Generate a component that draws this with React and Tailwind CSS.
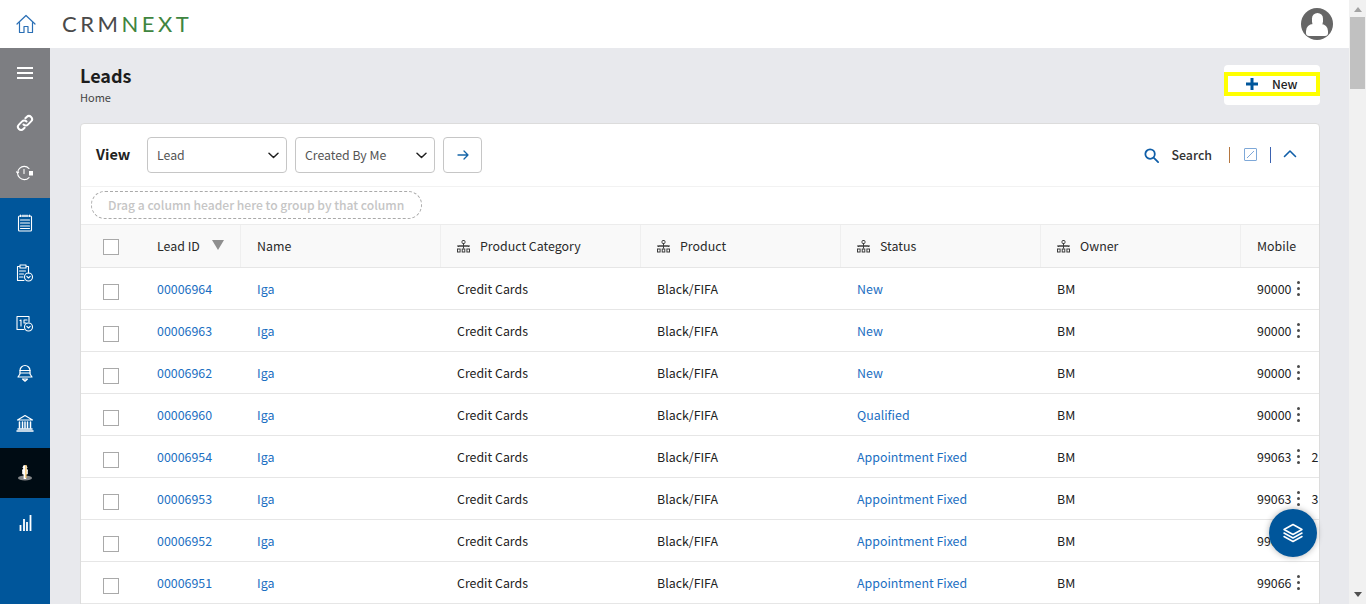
import React from "react";

const Ico = ({ children, w = 20, h = 20, vb = "0 0 20 20", className = "", sw = 1.4 }) => (
  <svg width={w} height={h} viewBox={vb} fill="none" stroke="currentColor" strokeWidth={sw} strokeLinecap="round" strokeLinejoin="round" className={className}>{children}</svg>
);

const Home = () => (
  <Ico w={20} h={20} sw={1.2} className="text-[#2a6fb5]">
    <path d="M1 10 10 1.5 19 10" />
    <path d="M3.5 8.5V18.5H8V12.5H12V18.5H16.5V8.5" />
  </Ico>
);
const Menu = () => (
  <Ico w={18} h={14} vb="0 0 18 14" sw={2}><path d="M1 2h16M1 7h16M1 12h16" strokeLinecap="butt" /></Ico>
);
const LinkI = () => (
  <Ico w={18} h={18} vb="0 0 18 18" sw={2}>
    <path d="M7.5 10.5a3 3 0 0 0 4.4.1l3.2-3.2a3.1 3.1 0 0 0-4.4-4.4L9.4 4.3" />
    <path d="M10.5 7.5a3 3 0 0 0-4.4-.1l-3.2 3.2a3.1 3.1 0 0 0 4.4 4.4l1.3-1.3" />
  </Ico>
);
const Clock = () => (
  <Ico w={18} h={16} vb="0 0 18 16" sw={1.1}>
    <path d="M13 3.5A6.6 6.6 0 1 0 13 12.5" />
    <path d="M8 4.5V8.5" />
    <path d="M1.5 8 .5 6.8M1.5 8l1.2-1" />
    <rect x="13" y="6" width="4" height="4.5" fill="currentColor" stroke="none" />
  </Ico>
);
const Notes = () => (
  <Ico w={16} h={18} vb="0 0 16 18" sw={1.1}>
    <rect x="1.5" y="2" width="13" height="15" rx="1" />
    <path d="M3.5 1v1.5M6 1v1.5M8 1v1.5M10 1v1.5M12.5 1v1.5M3.5 6h9M3.5 9h9M3.5 12h9M3.5 14.5h9" />
  </Ico>
);
const Clip = () => (
  <Ico w={18} h={18} vb="0 0 18 18" sw={1.1}>
    <path d="M10.5 2.5H12.5V9M8 16.5H1.5V2.5H3.5" />
    <rect x="4" y="1" width="6" height="3" />
    <path d="M3.5 7h6M3.5 10h4M3.5 13h3.5" />
    <circle cx="12.5" cy="13" r="4" />
    <path d="M10.8 12.4 12.5 14l1.7-1.6" />
  </Ico>
);
const Cal = () => (
  <Ico w={18} h={18} vb="0 0 18 18" sw={1.1}>
    <path d="M8 15.5H1V2.5H13V8" />
    <path d="M4 6.5 5 6v6M8 6H11M8 6v3h2" />
    <circle cx="12.5" cy="13" r="4" />
    <path d="M10.8 12.4 12.5 14l1.7-1.6" />
  </Ico>
);
const Bell = () => (
  <Ico w={18} h={18} vb="0 0 18 18" sw={1.2}>
    <path d="M4 10V6.5a5 5 0 0 1 10 0V10l2 3H2l2-3Z" />
    <path d="M4 6.5h10M4 9h10" />
    <path d="M6.5 15h5L9 17.2 6.5 15Z" />
  </Ico>
);
const Bank = () => (
  <Ico w={18} h={18} vb="0 0 18 18" sw={1.2}>
    <path d="M1.5 6 9 1.5 16.5 6H1.5Z" />
    <path d="M3.5 8v6M6.5 8v6M9 8v6M11.5 8v6M14.5 8v6" strokeWidth="1.5" />
    <path d="M2 15h14M1 17h16" strokeWidth="1.5" />
  </Ico>
);
const Figure = () => (
  <svg width="16" height="18" viewBox="0 0 16 18">
    <ellipse cx="8" cy="14" rx="7" ry="2.6" fill="#85888a" />
    <circle cx="8" cy="3.2" r="2.3" fill="#fff" />
    <rect x="5.2" y="5" width="5.6" height="5.5" rx="1.2" fill="#fff" />
    <rect x="6.6" y="9" width="2.6" height="6" fill="#fff" />
    <rect x="8.4" y="1" width="1" height="13" fill="#f2b33d" />
  </svg>
);
const Bars = () => (
  <Ico w={13} h={18} vb="0 0 13 18" sw={1.8}>
    <path d="M1.5 17v-6M5 17V5M8 17V8M11.5 17V1" strokeLinecap="butt" />
  </Ico>
);
const Tree = () => (
  <svg width="13" height="13" viewBox="0 0 13 13" fill="none" stroke="#3c3c3c" strokeWidth="1">
    <rect x="5" y=".5" width="3" height="3" rx="1" />
    <path d="M6.5 3.5v5M1.5 7V6h10v1M0 6h13" />
    <rect x=".5" y="9" width="2.6" height="3" />
    <rect x="5.2" y="9" width="2.6" height="3" />
    <rect x="9.9" y="9" width="2.6" height="3" />
  </svg>
);
const Chevron = () => (
  <Ico w={11} h={7} vb="0 0 11 7" sw={1.5} className="text-[#222]"><path d="M1 1.2 5.5 5.5 10 1.2" /></Ico>
);
const Kebab = () => (
  <span className="flex flex-col gap-[3px] ml-[6px] mr-[4px] shrink-0">
    <i className="block w-[3px] h-[3px] rounded-full bg-[#4a4a4a]" />
    <i className="block w-[3px] h-[3px] rounded-full bg-[#4a4a4a]" />
    <i className="block w-[3px] h-[3px] rounded-full bg-[#4a4a4a]" />
  </span>
);
const Box = () => <span className="block w-4 h-4 border border-[#a9a9a9] bg-white" />;

const nav = [
  [Menu, "grey"], [LinkI, "grey"], [Clock, "grey"], [Notes], [Clip], [Cal], [Bell], [Bank], [Figure, "active"], [Bars],
];

const rows = [
  ["00006964", "New", "90000", ""],
  ["00006963", "New", "90000", ""],
  ["00006962", "New", "90000", ""],
  ["00006960", "Qualified", "90000", ""],
  ["00006954", "Appointment Fixed", "99063", "2"],
  ["00006953", "Appointment Fixed", "99063", "3"],
  ["00006952", "Appointment Fixed", "99066", ""],
  ["00006951", "Appointment Fixed", "99066", ""],
];

const GRID = "grid grid-cols-[60px_100px_200px_200px_200px_200px_200px_78px]";
const link = "text-[#1c6fc2]";

const Select = ({ label }) => (
  <div className="w-[140px] h-9 border border-[#c6c6c6] rounded-[4px] flex items-center justify-between pl-[9px] pr-[7px] text-[#555] text-[12.3px]">
    <span className="-mt-[1px]">{label}</span><Chevron />
  </div>
);

const Head = ({ children, tree, last }) => (
  <div className={`flex items-center pl-4 gap-[10px] ${last ? "" : "border-r border-[#efefef]"}`}>
    {tree && <Tree />}<span>{children}</span>
  </div>
);

export default function App() {
  return (
    <div className="h-[604px] w-[1366px] overflow-hidden flex text-[12.4px] leading-5 text-[#222] bg-white" style={{ fontFamily: '"Noto Sans CJK JP", "Noto Sans", sans-serif' }}>
      <div className="flex-1 min-w-0 flex flex-col">
        <header className="h-12 shrink-0 bg-white flex items-center pl-4 pr-4">
          <Home />
          <div className="ml-[26px] -mt-[1px] text-[22px] leading-none tracking-[3.5px] whitespace-nowrap" style={{ fontFamily: 'Lato, sans-serif' }}>
            <span className="text-[#4a4a4a]">CRM</span><span className="text-[#3f8540]">NEXT</span>
          </div>
          <div className="ml-auto w-8 h-8 rounded-full bg-[#666] overflow-hidden flex flex-col items-center">
            <span className="block w-[11px] h-[14px] rounded-full bg-white mt-[5px]" />
            <span className="block w-[22px] h-[12px] rounded-t-[7px] rounded-b-[3px] bg-white -mt-[3px]" />
          </div>
        </header>
        <div className="flex-1 min-h-0 flex">
          <aside className="w-[50px] shrink-0 bg-[#00569b] flex flex-col text-white">
            {nav.map(([I, t], i) => (
              <div key={i} className={`h-[50px] shrink-0 flex items-center justify-center ${t === "grey" ? "bg-[#7d7e82]" : t === "active" ? "bg-[#000c14]" : ""}`}>
                <I />
              </div>
            ))}
          </aside>
          <main className="flex-1 min-w-0 bg-[#e8e9ed] pl-[30px] pr-[29px] pt-[17px] relative">
            <div className="flex justify-between h-[58px]">
              <div>
                <h1 className="text-[18px] leading-[22px] font-semibold text-[#1d1d1d] -mt-[1px]">Leads</h1>
                <div className="text-[11px] leading-4 text-[#444] mt-[3px]">Home</div>
              </div>
              <div className="w-[96px] h-10 bg-white rounded-[4px] pt-[7px]">
                <div className="w-full h-6 border-[4px] border-[#ffff00] flex items-center pl-[17px] gap-[13px] font-medium text-[12px]">
                  <svg width="14" height="14" viewBox="0 0 14 14" className="shrink-0 -mt-[1px]"><path d="M7 1v12M1 7h12" stroke="#00569b" strokeWidth="3" /></svg>
                  <span className="-mt-[1px]">New</span>
                </div>
              </div>
            </div>
            <section className="bg-white border border-[#dcdcdc] rounded-t-[4px] overflow-hidden">
              <div className="h-[63px] flex items-center pl-[15px] pr-[22px] border-b border-[#f2f2f2]">
                <span className="w-[51px] text-[14.5px] font-semibold -mt-[3px]">View</span>
                <div className="flex gap-2 items-center">
                  <Select label="Lead" />
                  <Select label="Created By Me" />
                  <div className="w-[39px] h-9 border border-[#c6c6c6] rounded-[4px] flex items-center justify-center text-[#1565a8]">
                    <Ico w={12} h={12} vb="0 0 12 12" sw={1.3}><path d="M1 6h10M7 2l4 4-4 4" /></Ico>
                  </div>
                </div>
                <div className="ml-auto flex items-center">
                  <Ico w={17} h={17} vb="0 0 18 18" sw={1.9} className="text-[#0f5ea8]"><circle cx="7.5" cy="7.5" r="5" /><path d="M11.5 11.5 16 16" /></Ico>
                  <span className="ml-[11px] text-[12.4px] font-medium text-[#333]">Search</span>
                  <span className="ml-[17px] w-px h-[16px] bg-[#b5763f]" />
                  <span className="ml-[14px] -mt-[2px] w-[13px] h-[13px] border border-[#7ea8d8] rounded-[1px] flex items-center justify-center">
                    <svg width="9" height="9" viewBox="0 0 9 9"><path d="M1 8 8 1" stroke="#7ea8d8" strokeWidth="1" /></svg>
                  </span>
                  <span className="ml-[13px] w-px h-[16px] bg-[#3b62b0]" />
                  <span className="ml-[12px] -mt-[3px] text-[#0f5ea8] flex">
                    <Ico w={14} h={9} vb="0 0 14 9" sw={1.6}><path d="M1.5 7.5 7 2l5.5 5.5" /></Ico>
                  </span>
                </div>
              </div>
              <div className="h-[38px] pt-[4px] pl-[10px] border-b border-[#ececec]">
                <div className="w-[331px] h-[28px] rounded-full border border-dashed border-[#aaa] flex items-center pl-4 text-[#c5c5c5] font-medium text-[12.1px] whitespace-nowrap">
                  Drag a column header here to group by that column
                </div>
              </div>
              <div className={`${GRID} h-[43px] bg-[#f9f9f9] border-b border-[#e6e6e6] text-[#2a2a2a]`}>
                <div className="flex items-center pl-[22px] pt-[2px]"><Box /></div>
                <div className="flex items-center pl-4 pr-[16px] justify-between border-r border-[#efefef]">
                  <span>Lead ID</span>
                  <span className="-mt-[2px] w-0 h-0 border-l-[6px] border-r-[6px] border-t-[10px] border-l-transparent border-r-transparent border-t-[#8f8f8f]" />
                </div>
                <Head>Name</Head>
                <Head tree>Product Category</Head>
                <Head tree>Product</Head>
                <Head tree>Status</Head>
                <Head tree>Owner</Head>
                <Head last>Mobile</Head>
              </div>
              {rows.map((r) => (
                <div key={r[0]} className={`${GRID} h-[42px] border-b border-[#e6e6e6] items-center`}>
                  <div className="pl-[22px] pt-[6px]"><Box /></div>
                  <div className={`pl-4 ${link}`}>{r[0]}</div>
                  <div className={`pl-4 ${link}`}>Iga</div>
                  <div className="pl-4">Credit Cards</div>
                  <div className="pl-4">Black/FIFA</div>
                  <div className={`pl-4 ${link}`}>{r[1]}</div>
                  <div className="pl-4">BM</div>
                  <div className="pl-4 flex items-center whitespace-nowrap overflow-hidden">
                    <span>{r[2]}</span><Kebab /><span className="ml-[7px]">{r[3]}</span>
                  </div>
                </div>
              ))}
            </section>
            <button className="absolute left-[1219px] top-[461px] w-12 h-12 rounded-full bg-[#00569b] shadow-[0_0_6px_rgba(0,0,0,0.3)] flex items-center justify-center text-white">
              <Ico w={22} h={22} vb="0 0 22 22" sw={1.5}>
                <path d="M11 2.5 20 7.5 11 12.5 2 7.5 11 2.5Z" />
                <path d="M2 11 11 16 20 11M2 14.5 11 19.5 20 14.5" />
              </Ico>
            </button>
          </main>
        </div>
      </div>
      <div className="w-[17px] shrink-0 bg-[#f1f1f1] flex flex-col items-center">
        <span className="mt-[7px] w-0 h-0 border-l-[4px] border-r-[4px] border-b-[5px] border-l-transparent border-r-transparent border-b-[#a3a3a3]" />
        <span className="mt-[5px] w-[15px] h-[72px] bg-[#c1c1c1]" />
        <span className="mt-auto mb-[7px] w-0 h-0 border-l-[4px] border-r-[4px] border-t-[5px] border-l-transparent border-r-transparent border-t-[#505050]" />
      </div>
    </div>
  );
}
